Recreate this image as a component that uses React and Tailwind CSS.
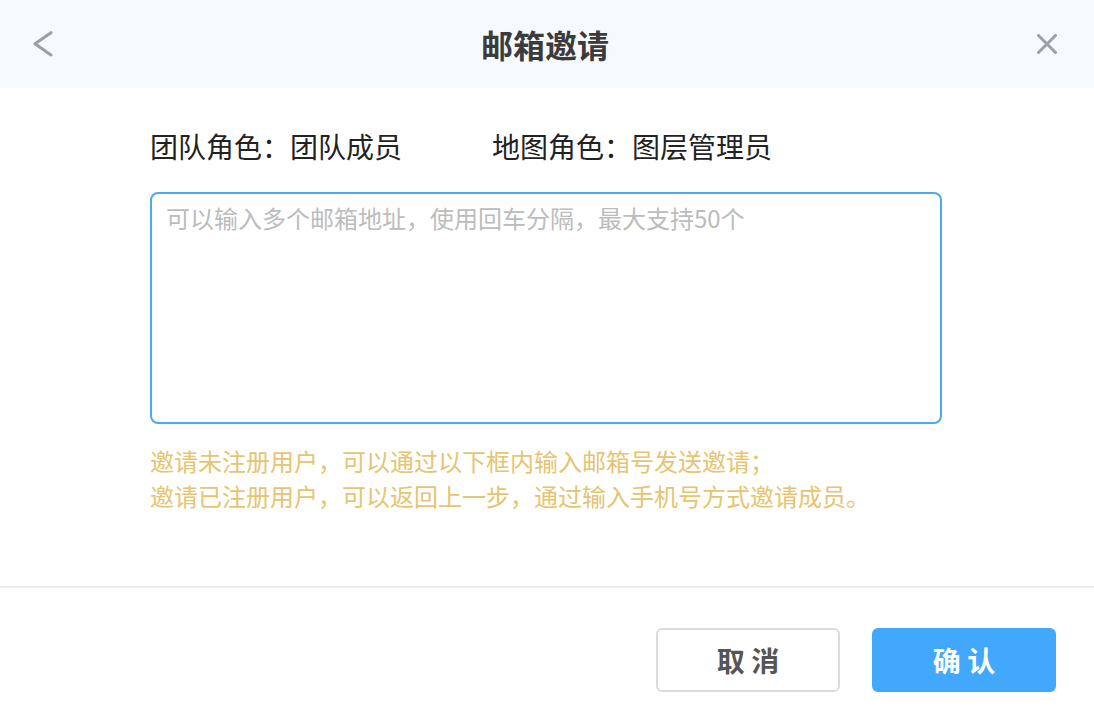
import React from 'react';

const FONT = '"Noto Sans CJK SC", "Noto Sans", sans-serif';

const BackIcon = () => (
  <svg width="20" height="28" viewBox="0 0 20 28" fill="none">
    <polyline
      points="18,2.7 2,13.8 18,25"
      stroke="#9a9fa8"
      strokeWidth="3"
      strokeLinecap="round"
      strokeLinejoin="round"
    />
  </svg>
);

const CloseIcon = () => (
  <svg width="20" height="20" viewBox="0 0 20 20" fill="none">
    <path d="M1.5 1.5 L18.5 18.5 M18.5 1.5 L1.5 18.5" stroke="#9a9fa8" strokeWidth="3" strokeLinecap="round" />
  </svg>
);

export default function App() {
  return (
    <div className="w-[1094px] h-[724px] bg-white flex flex-col overflow-hidden" style={{ fontFamily: FONT }}>
      {/* header */}
      <div className="h-[88px] shrink-0 bg-[#f6f9fe] flex items-center justify-between pl-[33px] pr-[37px]">
        <button className="flex items-center">
          <BackIcon />
        </button>
        <h1 className="text-[32px] leading-[40px] font-bold text-[#3b3b3b]">邮箱邀请</h1>
        <button className="flex items-center">
          <CloseIcon />
        </button>
      </div>

      {/* body */}
      <div className="px-[150px] pt-[38px] flex-1">
        <div className="flex gap-[90px] text-[28px] leading-[40px] text-[#222222]">
          <span>团队角色：团队成员</span>
          <span>地图角色：图层管理员</span>
        </div>

        <textarea
          className="mt-[26px] block w-[792px] h-[232px] border-2 border-[#4da9ee] rounded-[8px] pl-[14px] pr-[14px] pt-[9px] text-[24px] leading-[30px] text-[#333] placeholder:text-[#bcbcbc] outline-none resize-none"
          style={{ fontFamily: FONT }}
          placeholder="可以输入多个邮箱地址，使用回车分隔，最大支持50个"
        />

        <div className="mt-[19px] text-[24px] leading-[35px] text-[#e6c470]">
          <p>邀请未注册用户，可以通过以下框内输入邮箱号发送邀请；</p>
          <p>邀请已注册用户，可以返回上一步，通过输入手机号方式邀请成员。</p>
        </div>
      </div>

      {/* footer */}
      <div className="h-[2px] bg-[#ececec] shrink-0" />
      <div className="h-[136px] shrink-0 flex justify-end items-start gap-[32px] pt-[40px] pr-[38px]">
        <button className="w-[184px] h-[64px] border-2 border-[#dcdcdc] rounded-[6px] bg-white text-[28px] font-bold text-[#555555] leading-none">
          取 消
        </button>
        <button className="w-[184px] h-[64px] rounded-[6px] bg-[#42a8fd] text-[28px] font-bold text-white leading-none">
          确 认
        </button>
      </div>
    </div>
  );
}
